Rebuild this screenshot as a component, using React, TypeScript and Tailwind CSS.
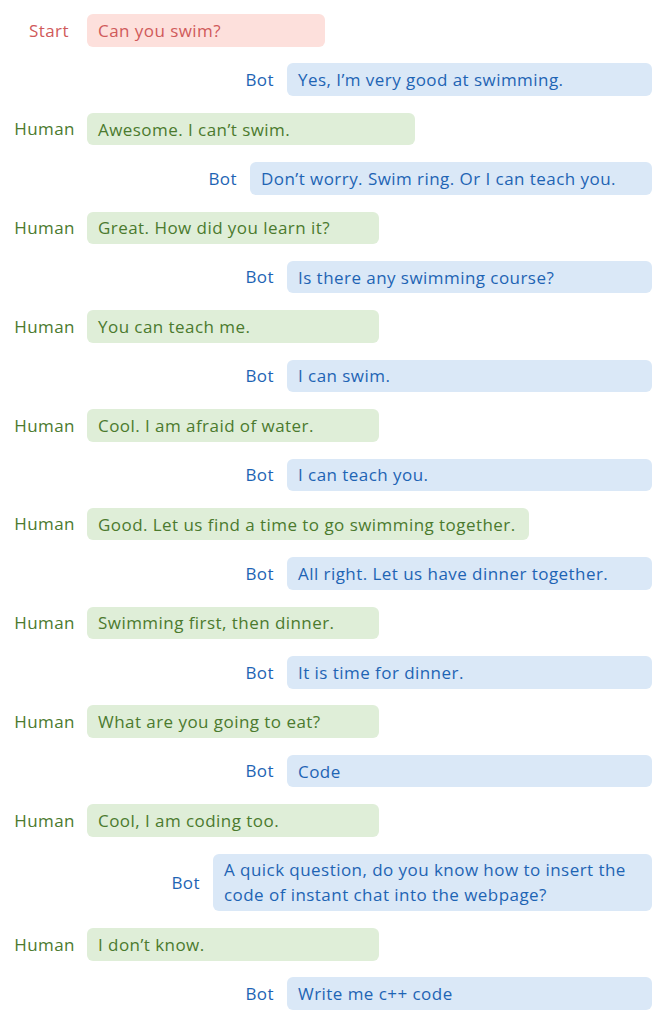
type Speaker = "start" | "human" | "bot"

interface Msg {
  who: Speaker
  text: string
  w?: string
}

// bubble widths follow the original layout, not just the text
const messages: Msg[] = [
  { who: "start", text: "Can you swim?", w: "w-[238px]" },
  { who: "bot", text: "Yes, I’m very good at swimming." },
  { who: "human", text: "Awesome. I can’t swim.", w: "w-[328px]" },
  { who: "bot", text: "Don’t worry. Swim ring. Or I can teach you.", w: "w-[402px]" },
  { who: "human", text: "Great. How did you learn it?" },
  { who: "bot", text: "Is there any swimming course?" },
  { who: "human", text: "You can teach me." },
  { who: "bot", text: "I can swim." },
  { who: "human", text: "Cool. I am afraid of water." },
  { who: "bot", text: "I can teach you." },
  { who: "human", text: "Good. Let us find a time to go swimming together.", w: "w-[442px]" },
  { who: "bot", text: "All right. Let us have dinner together." },
  { who: "human", text: "Swimming first, then dinner." },
  { who: "bot", text: "It is time for dinner." },
  { who: "human", text: "What are you going to eat?" },
  { who: "bot", text: "Code" },
  { who: "human", text: "Cool, I am coding too." },
  {
    who: "bot",
    text: "A quick question, do you know how to insert the code of instant chat into the webpage?",
    w: "w-[439px]",
  },
  { who: "human", text: "I don’t know." },
  { who: "bot", text: "Write me c++ code" },
]

function Row({ who, text, w }: Msg) {
  if (who === "bot") {
    return (
      <div className="flex items-center justify-end gap-[13px] pr-4">
        <span className="text-[#1e64b4]">Bot</span>
        <div
          className={`${w ?? "w-[365px]"} rounded-md bg-[#dae8f7] px-[11px] py-[3.75px] leading-[25px] text-[#1e64b4]`}
        >
          {text}
        </div>
      </div>
    )
  }
  const start = who === "start"
  return (
    <div className="flex items-center">
      <span
        className={
          start
            ? "w-[69px] text-right text-[#d05a5a] mr-[18px]"
            : "w-[75px] text-right text-[#4b7a2e] mr-3"
        }
      >
        {start ? "Start" : "Human"}
      </span>
      <div
        className={
          start
            ? `${w} rounded-md bg-[#fde0dc] px-[11px] py-[3.75px] leading-[25px] text-[#d05a5a]`
            : `${w ?? "w-[292px]"} rounded-md bg-[#dfeed8] px-[11px] py-[3.75px] leading-[25px] text-[#4b7a2e]`
        }
      >
        {text}
      </div>
    </div>
  )
}

export default function App() {
  return (
    <div className="flex min-h-screen w-[668px] flex-col gap-[16.9px] bg-white pt-[14px] text-[17px] tracking-[0.45px] font-['Open_Sans',sans-serif]">
      {messages.map((m, i) => (
        <Row key={i} {...m} />
      ))}
    </div>
  )
}
